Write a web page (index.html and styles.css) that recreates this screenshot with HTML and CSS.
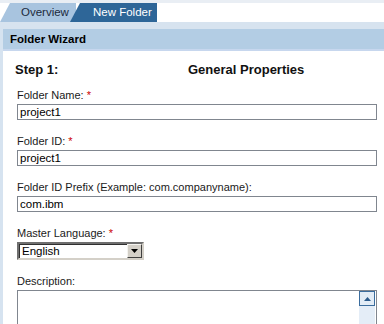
FILE: index.html
```html
<!DOCTYPE html>
<html lang="en">
<head>
    <meta charset="utf-8">
    <title>Folder Wizard</title>
    <link rel="stylesheet" href="styles.css">
</head>
<body>
    <div class="tabbar">
        <div class="tab tab-off">Overview</div>
        <div class="tab tab-on">New Folder</div>
    </div>

    <div class="panel">
        <div class="panel-top"></div>
        <div class="panel-title">Folder Wizard</div>

        <div class="panel-body">
            <div class="step-row">
                <div class="step-no">Step 1:</div>
                <div class="step-name">General Properties</div>
            </div>

            <div class="field">
                <label for="folder-name">Folder Name: <span class="req">*</span></label>
                <input type="text" class="text-input" id="folder-name" value="project1">
            </div>

            <div class="field">
                <label for="folder-id">Folder ID: <span class="req">*</span></label>
                <input type="text" class="text-input" id="folder-id" value="project1">
            </div>

            <div class="field">
                <label for="folder-prefix">Folder ID Prefix (Example: com.companyname):</label>
                <input type="text" class="text-input" id="folder-prefix" value="com.ibm">
            </div>

            <div class="field">
                <label>Master Language: <span class="req">*</span></label>
                <div class="dropdown">
                    <span class="dropdown-value">English</span>
                    <span class="dropdown-btn">
                        <svg width="7" height="4" viewBox="0 0 7 4"><path d="M0 0h7L3.5 4z" fill="#000"/></svg>
                    </span>
                </div>
            </div>

            <div class="field">
                <label>Description:</label>
                <div class="textbox">
                    <div class="textbox-area"></div>
                    <div class="scroll">
                        <div class="scroll-up">
                            <svg width="7" height="4" viewBox="0 0 7 4"><path d="M0 4h7L3.5 0z" fill="#2b5b8c"/></svg>
                        </div>
                        <div class="scroll-track"></div>
                    </div>
                </div>
            </div>
        </div>
    </div>
</body>
</html>
```

FILE: styles.css
```css
* {
    margin: 0;
    padding: 0;
    box-sizing: border-box;
}

body {
    font-family: Tahoma, 'Liberation Sans', Arial, sans-serif;
    font-size: 11px;
    color: #000;
    background: #fff;
    overflow: hidden;
}

/* tabs */
.tabbar {
    display: flex;
    height: 22px;
    border-top: 3px solid #e9eef4;
}

.tab {
    height: 19px;
    line-height: 19px;
    font-size: 11.5px;
    clip-path: polygon(10px 0, 100% 0, 100% 100%, 0 100%);
}

.tab-off {
    width: 76px;
    padding-left: 21px;
    background: #a8c4df;
    color: #1b2a3c;
}

.tab-on {
    width: 87px;
    margin-left: -6px;
    padding-left: 23px;
    background: #2e6698;
    color: #fff;
}

/* panel */
.panel {
    border-left: 3px solid #d6e3f0;
}

.panel-top {
    height: 7px;
    margin-left: -3px;
    background: #d7e3ef;
}

.panel-title {
    height: 22px;
    line-height: 20px;
    padding-left: 7px;
    font-size: 11.5px;
    font-weight: bold;
    background: #b3cde4;
    border-bottom: 2px solid #c7d7ee;
}

.panel-body {
    padding: 11px 7px 0 14px;
}

.step-row {
    display: flex;
    height: 16px;
    line-height: 16px;
    font-size: 13px;
    font-weight: bold;
    color: #111;
}

.step-no {
    width: 173px;
    margin-left: -2px;
}

.field {
    margin-top: 11px;
}

.field + .field {
    margin-top: 15px;
}

.field label {
    display: block;
    height: 13px;
    line-height: 13px;
    margin-bottom: 2px;
    color: #1a1a1a;
}

.req {
    color: #cc0000;
}

.text-input {
    display: block;
    width: 360px;
    height: 16px;
    padding: 0 2px;
    border: 1px solid #80868f;
    font-family: inherit;
    font-size: 11.5px;
    color: #000;
    background: #fff;
}

.dropdown {
    display: flex;
    align-items: center;
    width: 127px;
    height: 18px;
    border: 2px solid;
    border-color: #6f6f6f #d4d0c8 #d4d0c8 #6f6f6f;
    box-shadow: inset 1px 1px 0 #303030;
    background: #fff;
    font-size: 11.5px;
}

.dropdown-value {
    flex: 1;
    padding-left: 3px;
}

.dropdown-btn {
    display: flex;
    align-items: center;
    justify-content: center;
    width: 15px;
    height: 14px;
    background: #d4d0c8;
    border: 1px solid;
    border-color: #f4f3ef #404040 #404040 #f4f3ef;
}

.textbox {
    display: flex;
    width: 360px;
    height: 70px;
    border: 1px solid #80868f;
    background: #fff;
}

.textbox-area {
    flex: 1;
}

.scroll {
    width: 16px;
    display: flex;
    flex-direction: column;
    margin-right: 1px;
}

.scroll-up {
    display: flex;
    align-items: center;
    justify-content: center;
    height: 15px;
    background: #e2ecf6;
    border: 1px solid #3b6d9e;
}

.scroll-track {
    flex: 1;
    background: #e4edf7;
}
```
